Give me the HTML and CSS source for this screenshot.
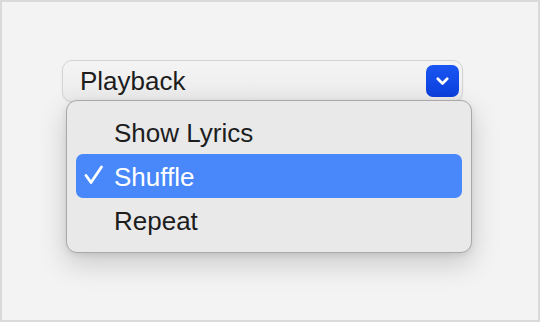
FILE: index.html
```html
<!DOCTYPE html>
<html>
<head>
<meta charset="utf-8">
<link rel="stylesheet" href="styles.css">
</head>
<body>
<div class="frame">
  <div class="picker">
    <div class="select">
      <span class="select-label">Playback</span>
      <span class="select-btn">
        <svg width="13" height="9" viewBox="0 0 13 9"><path d="M1.8 1.8 L6.5 6.5 L11.2 1.8" fill="none" stroke="#fff" stroke-width="2.7" stroke-linecap="round" stroke-linejoin="round"/></svg>
      </span>
    </div>
    <div class="menu">
      <div class="item"><span class="text">Show Lyrics</span></div>
      <div class="item active">
        <svg class="check" width="20" height="22" viewBox="0 0 20 22"><path d="M2 11.5 L7 18.5 L17.5 3" fill="none" stroke="#fff" stroke-width="2.8" stroke-linecap="round" stroke-linejoin="round"/></svg>
        <span class="text">Shuffle</span>
      </div>
      <div class="item"><span class="text">Repeat</span></div>
    </div>
  </div>
</div>
</body>
</html>
```
FILE: styles.css
```css
html, body {
  margin: 0;
  padding: 0;
}
body {
  width: 540px;
  height: 322px;
  overflow: hidden;
  font-family: "Liberation Sans", Arial, sans-serif;
}
.frame {
  box-sizing: border-box;
  width: 540px;
  height: 322px;
  border: 2px solid #dadada;
  background: #f3f3f3;
  padding: 58px 0 0 60px;
}
.picker {
  display: flex;
  flex-direction: column;
  width: 410px;
}
.select {
  box-sizing: border-box;
  width: 401px;
  height: 42px;
  display: flex;
  align-items: center;
  justify-content: space-between;
  padding: 0 3px 0 17px;
  border: 1px solid #d4d4d4;
  border-radius: 10px;
  background: linear-gradient(#f4f4f4, #ececec);
  box-shadow: 0 1px 2px rgba(0,0,0,0.08);
}
.select-label {
  font-size: 26px;
  line-height: 30px;
  color: #1d1d1d;
  margin-top: -1px;
}
.select-btn {
  width: 33px;
  height: 32px;
  border-radius: 7px;
  background: linear-gradient(#1a56f2, #0b40dd);
  display: flex;
  align-items: center;
  justify-content: center;
}
.menu {
  position: relative;
  z-index: 1;
  box-sizing: border-box;
  width: 406px;
  margin: -2px 0 0 4px;
  padding: 9px 9px 10px;
  background: #e9e9e9;
  border: 1px solid #a9a9a9;
  border-radius: 11px;
  box-shadow: 0 10px 28px rgba(0,0,0,0.18), 0 2px 6px rgba(0,0,0,0.08);
}
.item {
  box-sizing: border-box;
  height: 44px;
  display: flex;
  align-items: center;
  padding: 2px 0 0 38px;
  border-radius: 7px;
  position: relative;
}
.text {
  font-size: 26px;
  line-height: 30px;
  color: #1d1d1d;
}
.item.active {
  background: #4888fa;
}
.item.active .text {
  color: #fff;
}
.check {
  position: absolute;
  left: 8px;
  top: 10px;
}
```
